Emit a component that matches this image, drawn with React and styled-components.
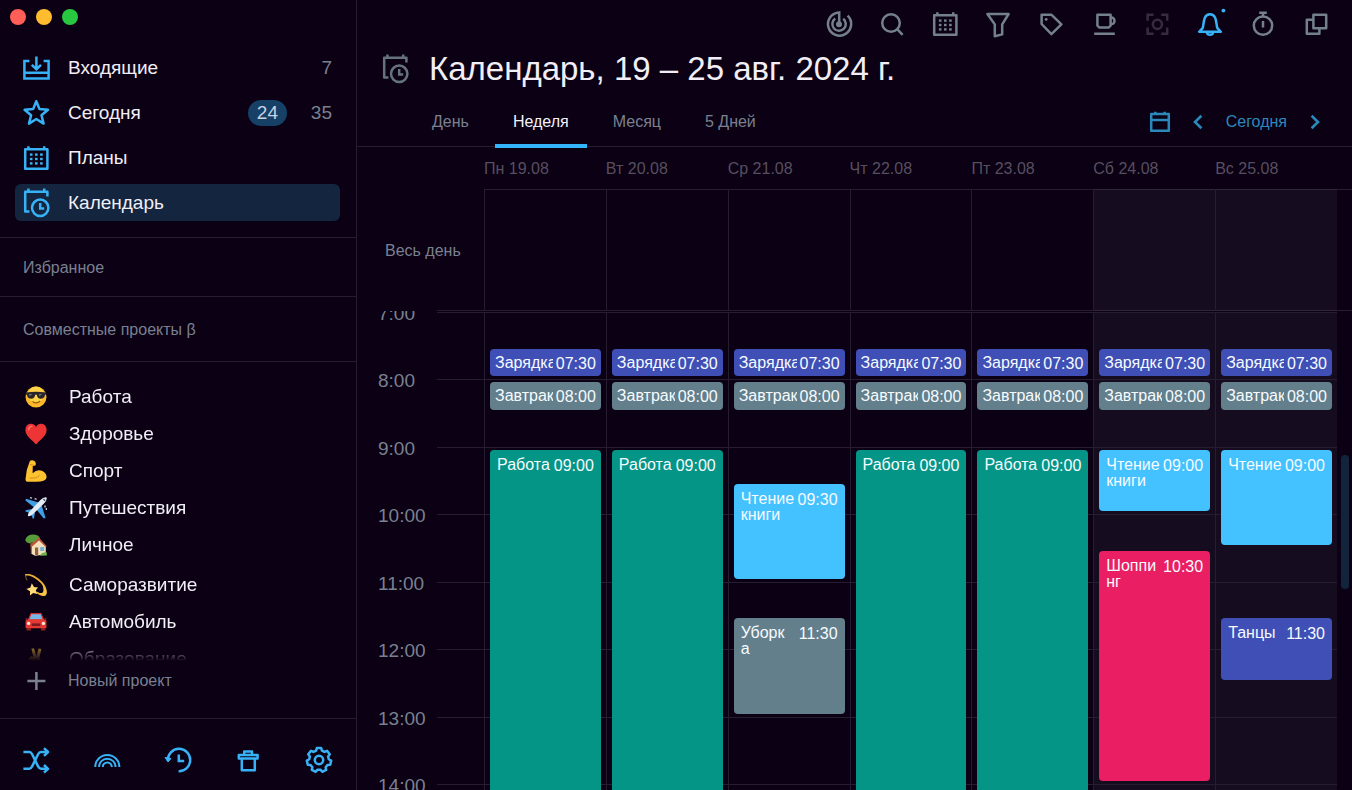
import React from "react";
import styled, { createGlobalStyle, css } from "styled-components";

const accent = "#38b2f6";
const muted = "#7a8090";
const line = "#261d30";

const GlobalStyle = createGlobalStyle`
  *, *::before, *::after { box-sizing: border-box; }
  body {
    margin: 0;
    background: #0b0014;
    color: #f1eef6;
    font-family: "Liberation Sans", Arial, sans-serif;
    font-size: 16px;
  }
  button, a, h1, h2, ul { margin: 0; padding: 0; font: inherit; color: inherit; }
  button { border: 0; background: none; cursor: pointer; }
  a { text-decoration: none; }
  ul { list-style: none; }
`;

/* ---------- icons ---------- */

const Svg = styled.svg`
  display: block;
  flex: none;
  width: 28px;
  height: 28px;
  overflow: visible;
  fill: none;
  stroke: currentColor;
  stroke-width: 2.5;
`;

const GridDots = () => (
  <g fill="currentColor" stroke="none">
    {[10.6, 15, 19.4].map((y) =>
      [9.2, 14.3, 19.4].map((x) => (
        <rect key={`${x}-${y}`} x={x - 1.3} y={y - 1.2} width="2.6" height="2.4" />
      ))
    )}
  </g>
);

const gearPath = (() => {
  const points = [];
  const teeth = 7;
  for (let i = 0; i < teeth; i += 1) {
    const mid = (i * 2 * Math.PI) / teeth - Math.PI / 2;
    [
      [-0.3, 9.8],
      [-0.18, 12.2],
      [0.18, 12.2],
      [0.3, 9.8],
    ].forEach(([a, r]) => {
      points.push(
        `${(14 + r * Math.cos(mid + a)).toFixed(2)} ${(14 + r * Math.sin(mid + a)).toFixed(2)}`
      );
    });
  }
  return `M${points.join("L")}Z`;
})();

const shapes = {
  inbox: (
    <>
      <path d="M7.4 7H2.4V24.4H26.6V7H21.6M2.4 18.8H26.6" />
      <path d="M14.4 2.4V14.8M9.8 10.8L14.4 15.2L19 10.8" />
    </>
  ),
  star: (
    <path
      strokeLinejoin="round"
      d="M14.3 2.2L17.5 10.1L26 10.8L19.5 16.3L21.6 24.6L14.3 20L7 24.6L9.1 16.3L2.6 10.8L11.1 10.1Z"
    />
  ),
  month: (
    <>
      <path strokeLinejoin="round" d="M3.2 5.2H25.4V24.8H3.2Z" />
      <path d="M6.4 2.2V5M22.2 2.2V5" />
      <GridDots />
    </>
  ),
  schedule: (
    <>
      <path strokeLinejoin="round" d="M7.4 22.6H3.2V2.8H25.4V7.4M6.4 -0.6V3M22.2 -0.6V3" />
      <circle cx="18.2" cy="18.8" r="8.2" />
      <path d="M18.2 14V19.6H22.2" />
    </>
  ),
  plus: <path d="M14.4 5V23M5.4 14H23.4" />,
  shuffle: (
    <>
      <path strokeLinejoin="round" d="M1.4 6H7.4Q9 6 10 8L16.2 20.6Q17.2 22.8 19 22.8H26" />
      <path strokeLinejoin="round" d="M1.4 22.8H7.4Q9 22.8 10 20.6L16.2 8Q17.2 6 19 6H26" />
      <path strokeLinejoin="round" d="M22 2.2L26 6L22 9.8M22 19L26 22.8L22 26.6" />
    </>
  ),
  rainbow: (
    <path
      strokeWidth="2"
      d="M2.2 21A12.1 12.1 0 0 1 26.4 21M6 21A8.3 8.3 0 0 1 22.6 21M9.8 21A4.5 4.5 0 0 1 18.8 21"
    />
  ),
  history: (
    <>
      <path d="M3.8 14.4A11.2 11.2 0 1 1 14.6 25.2" />
      <path fill="currentColor" strokeWidth="1" strokeLinejoin="round" d="M1 11.4L4 16L7 12.6Z" />
      <path d="M14.8 8.4V15H20.2" />
    </>
  ),
  trash: (
    <path
      strokeLinejoin="round"
      d="M10.2 9V5.6H18V9M4.8 9H23.6V12.4H4.8ZM7.8 12.4V24.2H20.8V12.4"
    />
  ),
  gear: (
    <>
      <path strokeLinejoin="round" d={gearPath} />
      <circle cx="14" cy="14" r="4.2" />
    </>
  ),
  radar: (
    <>
      <path d="M22.6 5.6A11.6 11.6 0 1 1 14.2 2.4V14" />
      <path d="M18.2 8.8A6.7 6.7 0 1 1 10.2 8.6" />
      <circle cx="14" cy="14.2" r="3" fill="currentColor" stroke="none" />
    </>
  ),
  search: (
    <>
      <circle cx="13" cy="13" r="8.8" />
      <path d="M19.2 19.2L24.6 24.8" />
    </>
  ),
  filter: <path strokeLinejoin="round" d="M3.4 4H24.6L18.2 14.4V24.4L10.8 26.2V14.4Z" />,
  tag: (
    <>
      <path strokeLinejoin="round" d="M4.6 4.8H14.6L24.4 14.4L14.4 24.2L4.6 14Z" />
      <circle cx="9.2" cy="9.4" r="1.4" fill="currentColor" stroke="none" />
    </>
  ),
  cup: (
    <>
      <path strokeLinejoin="round" d="M7.4 4.8H20.6V15.6L18.8 17.4H9.2L7.4 15.6Z" />
      <path d="M20.6 7.6C25.8 6.8 25.8 15 20.6 14M4.2 23.8H24.8" />
    </>
  ),
  focus: (
    <>
      <path d="M4.6 10.8V4.8H10.6M18.2 4.8H24.2V10.8M24.2 17.6V23.8H18.2M10.6 23.8H4.6V17.6" />
      <circle cx="14.4" cy="14.3" r="4.6" />
    </>
  ),
  bell: (
    <>
      <path
        strokeLinejoin="round"
        d="M3.2 21.8L6.8 17.8C8 13 7.2 4.2 14 4.2S20 13 21.2 17.8L24.8 21.8Z"
      />
      <path d="M10.8 22C11 25.8 17 25.8 17.2 22" />
      <circle cx="27.4" cy="0.6" r="1.9" fill="currentColor" stroke="none" />
    </>
  ),
  timer: (
    <>
      <circle cx="14" cy="15.6" r="9.2" />
      <path d="M10.2 2.8H17.8M14 3V6M14 11V17.4" />
    </>
  ),
  copy: (
    <path strokeLinejoin="round" d="M11.4 4.8H24.2V18.2H11.4ZM11 9.8H4.8V23.8H17.4V18.4" />
  ),
  date: <path strokeLinejoin="round" d="M5.2 6H22.8V22.8H5.2ZM5.2 12H22.8M9.4 3.8V6M18.6 3.8V6" />,
  prev: <path strokeWidth="2.6" d="M17.4 7.8L11 14L17.4 20.2" />,
  next: <path strokeWidth="2.6" d="M10.6 7.8L17 14L10.6 20.2" />,
};

const Icon = ({ name }) => (
  <Svg viewBox="0 0 28 28" aria-hidden="true">
    {shapes[name]}
  </Svg>
);

const EmojiSvg = styled.svg`
  display: block;
  flex: none;
  width: 22px;
  height: 22px;
  margin: 0 3px;
`;

const emoji = {
  cool: (
    <>
      <circle cx="11" cy="11" r="10.5" fill="#fbb829" />
      <circle cx="11" cy="8.6" r="8" fill="#ffd348" />
      <path d="M0.8 6.6Q11 4.8 21.2 6.6V8.4L20 8.8Q19.6 12.8 15.6 12.8Q12.4 12.8 11.8 8.8H10.2Q9.6 12.8 6.4 12.8Q2.4 12.8 2 8.8L0.8 8.4Z" fill="#29262b" />
      <path d="M4 8L7.4 7.8L4.6 10.6ZM13.8 8L17.2 7.8L14.4 10.6Z" fill="#6c6a70" />
      <path d="M7.6 15.4Q11.4 18.4 15.2 15" stroke="#9c5a10" strokeWidth="1.3" fill="none" />
    </>
  ),
  heart: (
    <>
      <path d="M11 21.6C7.6 17.2 0.4 13.6 0.4 6.8C0.4 0 8.6 -1.2 11 4C13.4 -1.2 21.6 0 21.6 6.8C21.6 13.6 14.4 17.2 11 21.6Z" fill="#ee3536" />
      <path d="M3 6.4C3.4 3.4 6 2 8 3.2C6 3.4 4.4 5 4 8Z" fill="#ff7a72" />
    </>
  ),
  arm: (
    <>
      <path d="M5 0.8Q7.6 -0.4 10 1.6Q11.4 3.2 10.4 5.4L7.8 6L7.6 13.2Q12 8.8 17 10.8Q21.6 12.8 21.6 17.4Q20.6 21.8 11.4 21.8H2Q0.2 21.4 0.6 18.6Q1 10 4 3.6Z" fill="#fcc22f" />
      <path d="M4.6 18Q11 19 14.6 15.4M5 4.6L9.6 5.4" stroke="#d98c18" strokeWidth="1" fill="none" />
    </>
  ),
  plane: (
    <>
      <path d="M14.4 5.8L1 1.8L0.4 3.6L9.6 10.8ZM16.4 7.6L20.6 21L18.8 21.6L11.4 12.6ZM7 12L0.6 13.2L0.4 14.4L5 16ZM10 15L9 21.4L7.8 21.8L6 17Z" fill="#3f9fe2" />
      <path d="M21.6 0.4Q18.4 -0.2 15.4 3L4 15.2Q2.6 17.4 3 19Q5 19.6 7 18L19 6.6Q22.2 3.6 21.6 0.4Z" fill="#e4ecf3" />
      <path d="M18.4 2L20.2 3.8" stroke="#44525f" strokeWidth="1.4" />
      <path d="M5 0.6L7 1.2M9.6 1.6L11.6 2.4M21.4 11V13M20 8.4V10.4" stroke="#bcc9d4" strokeWidth="1.4" />
    </>
  ),
  house: (
    <>
      <path d="M0.2 5.8Q2 0.2 9 0.4Q14.8 0.8 15 5.4Q11.6 10.2 6.4 9.6Q1.4 9.8 0.2 5.8Z" fill="#579c3b" />
      <path d="M5.4 8H8V20H5.8Z" fill="#81532c" />
      <path d="M6.8 11.2L13.8 4.6L20.8 11.8V20.6L10 21.8L6.8 20Z" fill="#f5dfbb" />
      <path d="M4.8 11.8L13.8 3.4L21.8 12.2L20.6 13L14 6.6L6.6 13Z" fill="#b8573c" />
      <path d="M10 13.4H13.2V21.4L10 20.8Z" fill="#91613d" />
      <path d="M15.2 13H19.2V17H15.2Z" fill="#71b2dc" />
      <path d="M15 21.8Q17 17.8 21.8 18.4V21.6Z" fill="#6eb446" />
    </>
  ),
  dizzy: (
    <>
      <path d="M0.8 0.8C8 -0.2 20 9 21 17.4C21 22.8 16 21.6 12.2 18.6" stroke="#eab234" strokeWidth="1.8" fill="none" strokeLinecap="round" />
      <path d="M17.4 10Q23.4 18.4 20.4 21.4Q17.4 22.4 12.6 18.2Q21 22 17.4 10Z" fill="#f8c845" />
      <path d="M0.8 0.8Q0.2 3.4 2 6.4" stroke="#8d6422" strokeWidth="1" fill="none" />
      <path d="M6.8 9.2L9 13L13 13.4L10.8 16.2L12.2 20L8.2 19L5 21.4L5 17.2L1.4 15L5.4 13.6Z" fill="#ffdc78" />
    </>
  ),
  car: (
    <>
      <path d="M5.6 2H16.4L19.2 9H2.8Z" fill="#d0302f" />
      <path d="M6.4 3.2H15.6L17.6 8.6H4.4Z" fill="#75b8e8" />
      <path d="M0.6 9.8Q2 8.2 4 8.2H18Q20 8.2 21.4 9.8V17.2H0.6Z" fill="#e73934" />
      <path d="M0.2 7.4H3V9H1ZM19 7.4H21.8L21 9H19ZM1.6 17H6V19.6H1.6ZM16 17H20.4V19.6H16Z" fill="#8f2224" />
      <path d="M6.6 12.4H15.4V15H6.6Z" fill="#7b1c20" />
      <circle cx="3.6" cy="12.4" r="1.7" fill="#ffe7d4" />
      <circle cx="18.4" cy="12.4" r="1.7" fill="#ffe7d4" />
    </>
  ),
  victory: (
    <path d="M6.4 0.8L9 0.2L11.4 8.4L13.6 0.4L16.4 1L14.4 9.8Q17.2 12 15.6 16L14 21.6H8L5.4 15.4L3.6 10.8L6 8.2L8.4 9Z" fill="#d7a63a" />
  ),
};

const Emoji = ({ name }) => (
  <EmojiSvg viewBox="0 0 22 22" aria-hidden="true">
    {emoji[name]}
  </EmojiSvg>
);

/* ---------- frame ---------- */

const Window = styled.div`
  display: flex;
  height: 100vh;
  overflow: hidden;
`;

const Sidebar = styled.aside`
  display: flex;
  flex: none;
  flex-direction: column;
  width: 357px;
  border-right: 1px solid ${line};
`;

const Lights = styled.div`
  display: flex;
  flex: none;
  gap: 10px;
  height: 49px;
  padding: 9px 10px;
`;

const Light = styled.button`
  width: 16px;
  height: 16px;
  border-radius: 50%;
  background: ${(p) => p.$color};
`;

const NavList = styled.ul`
  display: flex;
  flex: none;
  flex-direction: column;
  gap: 8px;
  padding: 0 16px 16px 15px;
`;

const NavLink = styled.a`
  display: flex;
  align-items: center;
  height: 37px;
  padding: 0 8px 0 7px;
  border-radius: 6px;
  font-size: 19px;
  background: ${(p) => (p.$active ? "#13253f" : "transparent")};
  svg { color: ${accent}; }
`;

const NavLabel = styled.span`
  flex: 1;
  padding-left: 18px;
`;

const Badge = styled.span`
  padding: 0 9px;
  border-radius: 13px;
  background: #164066;
  color: #c3d3e2;
  line-height: 26px;
`;

const Count = styled.span`
  min-width: 45px;
  color: ${muted};
  text-align: right;
`;

const SectionTitle = styled.h2`
  flex: none;
  padding: 2px 23px 0;
  border-top: 1px solid ${line};
  color: ${muted};
  font-size: 16px;
  font-weight: 400;
  line-height: ${(p) => (p.$tall ? 62 : 56)}px;
`;

const Projects = styled.ul`
  flex: 1;
  min-height: 0;
  padding: 16px 22px 0;
  overflow: hidden;
  border-top: 1px solid ${line};
  mask-image: linear-gradient(to top, transparent, #000 20px);
`;

const ProjectGroup = styled.li`
  & + & { margin-top: 3px; }
`;

const ProjectLink = styled.a`
  display: flex;
  align-items: center;
  gap: 19px;
  height: 37px;
  font-size: 19px;
`;

const NewProject = styled.button`
  display: flex;
  flex: none;
  align-items: center;
  gap: 18px;
  height: 40px;
  margin: 0 22px 17px;
  color: ${muted};
`;

const SidebarTools = styled.div`
  display: flex;
  flex: none;
  justify-content: space-between;
  padding: 27px 23px 16px 22px;
  border-top: 1px solid ${line};
  color: ${accent};
`;

const IconButton = styled.button`
  flex: none;
  width: 28px;
  height: 28px;
  ${(p) => p.$tone && css`color: ${p.$tone};`}
`;

/* ---------- main ---------- */

const Main = styled.main`
  display: flex;
  flex: 1;
  flex-direction: column;
  min-width: 0;
`;

const Toolbar = styled.div`
  display: flex;
  flex: none;
  align-items: center;
  justify-content: flex-end;
  gap: 25px;
  height: 47px;
  padding-right: 22px;
  color: #74808d;
`;

const TitleRow = styled.header`
  display: flex;
  flex: none;
  align-items: center;
  gap: 20px;
  height: 44px;
  padding-left: 24px;
  svg { color: #66737f; }
`;

const Title = styled.h1`
  font-size: 33px;
  font-weight: 400;
  line-height: 40px;
  white-space: nowrap;
`;

const TabRow = styled.div`
  display: flex;
  flex: none;
  height: 56px;
  padding: 0 23px 0 57px;
  border-bottom: 1px solid ${line};
`;

const Tabs = styled.div`
  display: flex;
  flex: 1;
  align-items: flex-start;
  gap: 8px;
`;

const Tab = styled.button`
  padding: 21px 18px 12px;
  border-bottom: 4px solid ${(p) => (p.$active ? "#34b5fb" : "transparent")};
  color: ${(p) => (p.$active ? "#f4f1f8" : muted)};
  line-height: 20px;
  white-space: nowrap;
`;

const Period = styled.div`
  display: flex;
  align-items: center;
  gap: 10px;
  padding-top: 6px;
  color: #2b88bb;
`;

const Stepper = styled.div`
  display: flex;
  align-items: center;
  gap: 14px;
`;

const dayColumns = css`
  display: grid;
  grid-template-columns: 80px 47px repeat(7, 1fr);
  padding-right: 15px;
`;

const DayHead = styled.div`
  ${dayColumns}
  flex: none;
  padding-top: 2px;
  color: #574f5f;
  line-height: 40px;
`;

const DayName = styled.div`
  grid-column: ${(p) => p.$day + 3};
`;

const AllDay = styled.div`
  ${dayColumns}
  flex: none;
  height: 122px;
  background:
    linear-gradient(${line}, ${line}) 127px 0 / 100% 1px no-repeat,
    linear-gradient(${line}, ${line}) 80px 100% / 100% 1px no-repeat;
`;

const AllDayLabel = styled.div`
  grid-column: 1 / 3;
  padding: 2px 0 0 28px;
  color: ${muted};
  line-height: 120px;
`;

const DayColumn = styled.div`
  grid-column: ${(p) => p.$day + 3};
  grid-row: 1 / -1;
  border-left: 1px solid ${line};
  background: ${(p) => (p.$day > 4 ? "rgba(235, 238, 255, 0.05)" : "transparent")};
`;

const Scroller = styled.div`
  position: relative;
  flex: 1;
  min-height: 0;
  overflow: hidden;
`;

const ScrollThumb = styled.div`
  position: absolute;
  top: 30%;
  right: 3px;
  width: 8px;
  height: 28%;
  border-radius: 4px;
  background: #12243c;
`;

const Timeline = styled.div`
  ${dayColumns}
  grid-template-rows: repeat(28, 1fr);
  height: 945px;
  padding-top: 1px;
`;

const HourLabel = styled.div`
  grid-column: 1;
  grid-row: ${(p) => p.$row};
  height: 20px;
  margin-top: -8px;
  padding-left: 21px;
  color: ${muted};
  font-size: 19px;
  line-height: 20px;
`;

const HourLine = styled.div`
  grid-column: 2 / -1;
  grid-row: ${(p) => p.$row};
  border-top: 1px solid ${line};
`;

const EventCard = styled.button`
  display: flex;
  align-items: flex-start;
  justify-content: space-between;
  gap: ${(p) => (p.$compact ? 3 : 2)}px;
  grid-column: ${(p) => p.$day + 3};
  grid-row: ${(p) => p.$from} / ${(p) => p.$to};
  margin: 3px 5px 3px 6px;
  padding: ${(p) => (p.$compact ? "5px 5px 0" : "7px 7px 0")};
  border-radius: 4px;
  overflow: hidden;
  background: ${(p) => p.$color};
  color: #f6fbff;
  text-align: left;
`;

const EventTitle = styled.span`
  flex: 1;
  min-width: 0;
  overflow: hidden;
  line-height: ${(p) => (p.$compact ? 18 : 16)}px;
  white-space: pre;
`;

const EventTime = styled.time`
  flex: none;
  line-height: ${(p) => (p.$compact ? 20 : 18)}px;
`;

/* ---------- data ---------- */

const nav = [
  { icon: "inbox", label: "Входящие", count: 7 },
  { icon: "star", label: "Сегодня", badge: 24, count: 35 },
  { icon: "month", label: "Планы" },
  { icon: "schedule", label: "Календарь", active: true },
];

const projectGroups = [
  [
    ["cool", "Работа"],
    ["heart", "Здоровье"],
    ["arm", "Спорт"],
    ["plane", "Путешествия"],
    ["house", "Личное"],
  ],
  [
    ["dizzy", "Саморазвитие"],
    ["car", "Автомобиль"],
    ["victory", "Образование"],
  ],
];

const tools = [
  ["radar", "Фокус"],
  ["search", "Поиск"],
  ["month", "Планы"],
  ["filter", "Фильтры"],
  ["tag", "Метки"],
  ["cup", "Перерыв"],
  ["focus", "Концентрация", "#352d3d"],
  ["bell", "Уведомления", accent],
  ["timer", "Таймер"],
  ["copy", "Новое окно"],
];

const sidebarTools = [
  ["shuffle", "Перемешать"],
  ["rainbow", "Темы"],
  ["history", "История"],
  ["trash", "Корзина"],
  ["gear", "Настройки"],
];

const days = ["Пн 19.08", "Вт 20.08", "Ср 21.08", "Чт 22.08", "Пт 23.08", "Сб 24.08", "Вс 25.08"];
const hours = [7, 8, 9, 10, 11, 12, 13, 14];

const indigo = "#3f4fb5";
const slate = "#637f8c";
const teal = "#049586";
const sky = "#43c2ff";
const pink = "#ea1e62";

const events = [
  ...days.flatMap((_, day) => [
    { day, start: 7.5, end: 8, title: "Зарядка", color: indigo },
    { day, start: 8, end: 8.5, title: "Завтрак", color: slate },
  ]),
  ...[0, 1, 3, 4].map((day) => ({ day, start: 9, end: 18, title: "Работа", color: teal })),
  { day: 2, start: 9.5, end: 11, title: "Чтение\nкниги", color: sky },
  { day: 2, start: 11.5, end: 13, title: "Уборк\nа", color: slate },
  { day: 5, start: 9, end: 10, title: "Чтение\nкниги", color: sky },
  { day: 5, start: 10.5, end: 14, title: "Шоппи\nнг", color: pink },
  { day: 6, start: 9, end: 10.5, title: "Чтение", color: sky },
  { day: 6, start: 11.5, end: 12.5, title: "Танцы", color: indigo },
];

const rowOf = (hour) => (hour - 7) * 2 + 1;
const clock = (hour) =>
  `${String(Math.floor(hour)).padStart(2, "0")}:${hour % 1 ? "30" : "00"}`;

export default function App() {
  return (
    <>
      <GlobalStyle />
      <Window>
        <Sidebar>
          <Lights>
            <Light $color="#ff5f57" aria-label="Закрыть" />
            <Light $color="#febc2e" aria-label="Свернуть" />
            <Light $color="#28c840" aria-label="Развернуть" />
          </Lights>
          <nav>
            <NavList>
              {nav.map((item) => (
                <li key={item.label}>
                  <NavLink href="#" $active={item.active}>
                    <Icon name={item.icon} />
                    <NavLabel>{item.label}</NavLabel>
                    {item.badge && <Badge>{item.badge}</Badge>}
                    {item.count && <Count>{item.count}</Count>}
                  </NavLink>
                </li>
              ))}
            </NavList>
          </nav>
          <SectionTitle>Избранное</SectionTitle>
          <SectionTitle $tall>Совместные проекты β</SectionTitle>
          <Projects>
            {projectGroups.map((group) => (
              <ProjectGroup key={group[0][1]}>
                {group.map(([icon, label]) => (
                  <ProjectLink href="#" key={label}>
                    <Emoji name={icon} />
                    {label}
                  </ProjectLink>
                ))}
              </ProjectGroup>
            ))}
          </Projects>
          <NewProject>
            <Icon name="plus" />
            Новый проект
          </NewProject>
          <SidebarTools>
            {sidebarTools.map(([icon, label]) => (
              <IconButton key={icon} aria-label={label}>
                <Icon name={icon} />
              </IconButton>
            ))}
          </SidebarTools>
        </Sidebar>
        <Main>
          <Toolbar>
            {tools.map(([icon, label, tone]) => (
              <IconButton key={icon} aria-label={label} $tone={tone}>
                <Icon name={icon} />
              </IconButton>
            ))}
          </Toolbar>
          <TitleRow>
            <Icon name="schedule" />
            <Title>Календарь, 19 – 25 авг. 2024 г.</Title>
          </TitleRow>
          <TabRow>
            <Tabs>
              <Tab>День</Tab>
              <Tab $active>Неделя</Tab>
              <Tab>Месяц</Tab>
              <Tab>5 Дней</Tab>
            </Tabs>
            <Period>
              <IconButton aria-label="Выбрать дату">
                <Icon name="date" />
              </IconButton>
              <Stepper>
                <IconButton aria-label="Назад">
                  <Icon name="prev" />
                </IconButton>
                <button>Сегодня</button>
                <IconButton aria-label="Вперёд">
                  <Icon name="next" />
                </IconButton>
              </Stepper>
            </Period>
          </TabRow>
          <DayHead>
            {days.map((name, day) => (
              <DayName key={name} $day={day}>
                {name}
              </DayName>
            ))}
          </DayHead>
          <AllDay>
            <AllDayLabel>Весь день</AllDayLabel>
            {days.map((name, day) => (
              <DayColumn key={name} $day={day} />
            ))}
          </AllDay>
          <Scroller>
            <Timeline>
              {days.map((name, day) => (
                <DayColumn key={name} $day={day} />
              ))}
              {hours.map((hour) => (
                <React.Fragment key={hour}>
                  <HourLabel $row={rowOf(hour)}>{hour}:00</HourLabel>
                  <HourLine $row={rowOf(hour)} />
                </React.Fragment>
              ))}
              {events.map((e) => {
                const compact = e.end - e.start < 1;
                return (
                  <EventCard
                    key={`${e.day}-${e.start}`}
                    $day={e.day}
                    $from={rowOf(e.start)}
                    $to={rowOf(e.end)}
                    $color={e.color}
                    $compact={compact}
                  >
                    <EventTitle $compact={compact}>{e.title}</EventTitle>
                    <EventTime $compact={compact}>{clock(e.start)}</EventTime>
                  </EventCard>
                );
              })}
            </Timeline>
            <ScrollThumb />
          </Scroller>
        </Main>
      </Window>
    </>
  );
}
